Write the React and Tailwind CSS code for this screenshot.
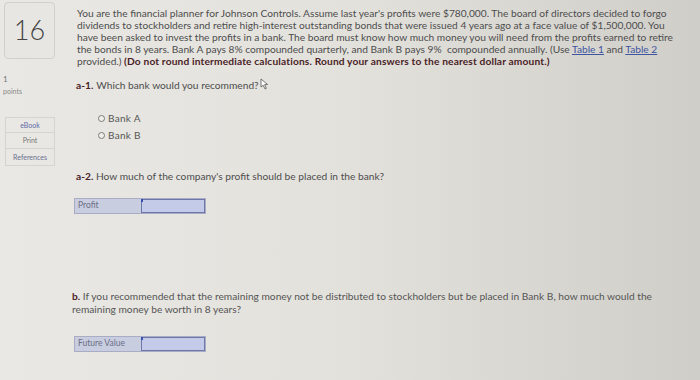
import React from 'react';

const lines = [
  "You are the financial planner for Johnson Controls. Assume last year's profits were $780,000. The board of directors decided to forgo",
  'dividends to stockholders and retire high-interest outstanding bonds that were issued 4 years ago at a face value of $1,500,000. You',
  'have been asked to invest the profits in a bank. The board must know how much money you will need from the profits earned to retire',
];

function AnswerRow({ label }) {
  return (
    <div className="flex h-[16px] w-[132px] border border-[#a9acc4] bg-[#c9cde0]">
      <div className="flex w-[66px] items-center pl-[3px] text-[8.5px] text-[#6b6f86]">{label}</div>
      <div className="relative flex-1 border border-[#6d76a8] bg-[#c3cbe9]">
        <span className="absolute -left-[1px] -top-[1px] h-[3px] w-[2px] bg-[#3550b0]" />
      </div>
    </div>
  );
}

function Radio({ label }) {
  return (
    <div className="flex items-center gap-[3px] h-[17px]">
      <span className="h-[7px] w-[7px] rounded-full border border-[#7a7a7a] bg-[#f0efec]" />
      <span className="text-[10px] tracking-[0.3px] text-[#555]">{label}</span>
    </div>
  );
}

export default function App() {
  return (
    <div
      className="flex h-[380px] w-[700px] overflow-hidden bg-gradient-to-r from-[#e9e8e4] via-[#e3e1dc] to-[#d0cec9] text-[#4a4a4a]"
      style={{ fontFamily: 'Lato, "Open Sans", sans-serif' }}
    >
      {/* left rail */}
      <div className="flex w-[60px] shrink-0 flex-col pl-[4px] pt-[2px]">
        <div className="flex h-[57px] w-[51px] items-center justify-center rounded-[4px] border border-[#d2d0cb] bg-[#e7e6e2]">
          <span className="text-[27px] font-light text-[#444]">16</span>
        </div>
        <div className="mt-[16px] -ml-[1px] text-[8px] leading-[9px] text-[#777]">1</div>
        <div className="mt-[3px] -ml-[1px] text-[7px] leading-[8px] text-[#888]">points</div>
        <div className="mt-[22px] ml-[1px] flex w-[50px] flex-col">
          <div className="flex h-[16px] items-center justify-center border border-[#d6d4cf] text-[7px] text-[#5d6aa8]">eBook</div>
          <div className="flex h-[16px] items-center justify-center border border-t-0 border-[#d6d4cf] text-[7px] text-[#777]">Print</div>
          <div className="flex h-[17px] items-center justify-center border border-t-0 border-[#d6d4cf] text-[7px] text-[#6b6f90]">References</div>
        </div>
      </div>

      {/* main */}
      <div className="flex flex-col pl-[17px] pt-[7px]">
        <div className="text-[10.2px] leading-[12px] whitespace-nowrap text-[#4d4d4d]">
          {lines.map((l) => (
            <div key={l}>{l}</div>
          ))}
          <div>
            the bonds in 8 years. Bank A pays 8% compounded quarterly, and Bank B pays 9%&nbsp; compounded annually. (Use{' '}
            <span className="text-[#3f55a0] underline">Table 1</span> and{' '}
            <span className="text-[#3f55a0] underline">Table 2</span>
          </div>
          <div>
            provided.){' '}
            <span className="font-bold tracking-[0.15px] text-[#4a2226]">
              (Do not round intermediate calculations. Round your answers to the nearest dollar amount.)
            </span>
          </div>
        </div>

        <div className="mt-[11px] -ml-[1px] flex items-center text-[10.2px] text-[#4d4d4d]">
          <span className="font-bold text-[#4a2226]">a-1.</span>
          <span className="ml-[3px]">Which bank would you recommend?</span>
          <svg width="11" height="12" viewBox="0 0 11 12" className="ml-[1px] -mt-[4px]">
            <path d="M1 1 L1 9 L3.2 7.2 L5 11 L6.4 10.4 L4.6 6.6 L7.6 6.5 Z" fill="#fff" stroke="#555" strokeWidth="0.8" />
          </svg>
        </div>

        <div className="mt-[17px] ml-[21px] flex flex-col">
          <Radio label="Bank A" />
          <Radio label="Bank B" />
        </div>

        <div className="mt-[25px] -ml-[1px] text-[10.2px] text-[#4d4d4d]">
          <span className="font-bold text-[#4a2226]">a-2.</span> How much of the company's profit should be placed in the bank?
        </div>

        <div className="mt-[13px] -ml-[3px]">
          <AnswerRow label="Profit" />
        </div>

        <div className="mt-[76px] -ml-[5px] text-[10.2px] leading-[13px] whitespace-nowrap text-[#555]">
          <div>
            <span className="font-bold text-[#4a2226]">b.</span> If you recommended that the remaining money not be distributed to stockholders but be placed in Bank B, how much would the
          </div>
          <div>remaining money be worth in 8 years?</div>
        </div>

        <div className="mt-[20px] -ml-[3px]">
          <AnswerRow label="Future Value" />
        </div>
      </div>
    </div>
  );
}
